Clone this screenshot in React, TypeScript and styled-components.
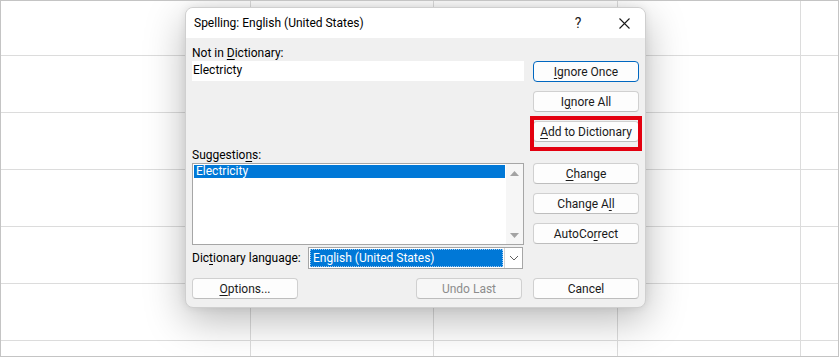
import React from "react";
import styled, { createGlobalStyle } from "styled-components";

const GlobalStyle = createGlobalStyle`
  html, body {
    margin: 0;
    padding: 0;
    background: #fff;
  }
  body {
    font-family: "Segoe UI", Roboto, "Noto Sans", "Liberation Sans", sans-serif;
    font-size: 12px;
    color: #000;
  }
`;

const GRID = "#dcdcdc";

const Styles = {
  Sheet: styled.div`
    width: 839px;
    height: 357px;
    box-sizing: border-box;
    border: 1px solid #c4c4c4;
    overflow: hidden;
    padding: 6px 0 0 184px;
    background-color: #fff;
    background-image:
      linear-gradient(${GRID}, ${GRID}),
      linear-gradient(${GRID}, ${GRID}),
      linear-gradient(${GRID}, ${GRID}),
      linear-gradient(${GRID}, ${GRID}),
      linear-gradient(to bottom, transparent 54px, ${GRID} 54px, ${GRID} 55px, transparent 55px);
    background-size: 1px 100%, 1px 100%, 1px 100%, 1px 100%, 100% 57px;
    background-position: 249px 0, 432px 0, 616px 0, 799px 0, 0 0;
    background-repeat: no-repeat, no-repeat, no-repeat, no-repeat, repeat-y;
  `,
  Dialog: styled.div`
    width: 461px;
    height: 301px;
    box-sizing: border-box;
    display: flex;
    flex-direction: column;
    border: 1px solid #cfcfcf;
    border-radius: 8px;
    overflow: hidden;
    background: #f0f0f0;
    box-shadow: 0 12px 40px rgba(0, 0, 0, 0.28), 0 0 8px rgba(0, 0, 0, 0.08);
  `,
  TitleBar: styled.div`
    height: 30px;
    flex: none;
    display: flex;
    align-items: center;
    padding: 0 6px 0 8px;
    background: #fff;
  `,
  Title: styled.div`
    flex: 1;
    font-size: 12px;
  `,
  TitleButton: styled.div<{ $gap?: number }>`
    width: 30px;
    margin-right: ${({ $gap }) => $gap || 0}px;
    display: flex;
    justify-content: center;
    align-items: center;
    font-size: 14px;
    color: #1a1a1a;
  `,
  Body: styled.div`
    flex: 1;
    display: grid;
    grid-template-columns: 332px 106px;
    column-gap: 9px;
    padding: 7px 6px 0 6px;
  `,
  Column: styled.div`
    display: flex;
    flex-direction: column;
  `,
  Label: styled.div<{ $top?: number }>`
    height: 16px;
    line-height: 16px;
    margin-top: ${({ $top }) => $top || 0}px;
    white-space: nowrap;
  `,
  TextField: styled.div`
    height: 20px;
    line-height: 19px;
    padding-left: 1px;
    background: #fff;
  `,
  ListBox: styled.div`
    height: 82px;
    box-sizing: border-box;
    display: flex;
    border: 1px solid #a6a6a6;
    background: #fff;
  `,
  ListItems: styled.div`
    flex: 1;
    padding: 1px;
  `,
  ListItem: styled.div<{ $selected?: boolean }>`
    height: 13px;
    line-height: 13px;
    padding-left: 2px;
    background: ${({ $selected }) => ($selected ? "#0078d7" : "transparent")};
    color: ${({ $selected }) => ($selected ? "#fff" : "#000")};
  `,
  ScrollBar: styled.div`
    width: 17px;
    display: flex;
    flex-direction: column;
    justify-content: space-between;
    align-items: center;
    padding: 7px 0 6px;
    background: #f6f6f6;
  `,
  LanguageRow: styled.div`
    display: flex;
    align-items: center;
    margin-top: 2px;
    height: 22px;
  `,
  LanguageLabel: styled.div`
    width: 116px;
    white-space: nowrap;
  `,
  Combo: styled.div`
    flex: 1;
    height: 22px;
    box-sizing: border-box;
    display: flex;
    border: 1px solid #a6a6a6;
    background: #fff;
    margin-right: 1px;
  `,
  ComboValue: styled.div`
    flex: 1;
    margin: 1px;
    padding-left: 2px;
    line-height: 16px;
    background: #0078d7;
    color: #fff;
    border: 1px dotted #9ec9f0;
  `,
  ComboArrow: styled.div`
    width: 17px;
    display: flex;
    align-items: center;
    justify-content: center;
    border-left: 1px solid #d4d4d4;
  `,
  ButtonRow: styled.div`
    display: flex;
    justify-content: space-between;
    margin-top: 9px;
    padding-right: 2px;
  `,
  Button: styled.div<{ $default?: boolean; $disabled?: boolean; $top?: number }>`
    position: relative;
    width: 106px;
    height: 21px;
    box-sizing: border-box;
    flex: none;
    margin-top: ${({ $top }) => $top || 0}px;
    display: flex;
    align-items: center;
    justify-content: center;
    border: 1px solid ${({ $default }) => ($default ? "#0067c0" : "#d0d0d0")};
    border-bottom-color: ${({ $default }) => ($default ? "#0067c0" : "#bdbdbd")};
    border-radius: 4px;
    background: ${({ $disabled }) => ($disabled ? "#f7f7f7" : "#fdfdfd")};
    color: ${({ $disabled }) => ($disabled ? "#8c8c8c" : "#1a1a1a")};
    white-space: nowrap;
  `,
  Highlight: styled.span`
    position: absolute;
    left: -4px;
    right: -4px;
    top: -6px;
    bottom: -10px;
    border: 4px solid #e3000f;
    pointer-events: none;
  `,
  Key: styled.u`
    text-underline-offset: 2px;
  `
};

const Triangle = ({ up }: { up?: boolean }) => (
  <svg width="9" height="5" viewBox="0 0 9 5">
    <path d={up ? "M0 5 L4.5 0 L9 5 Z" : "M0 0 L4.5 5 L9 0 Z"} fill="#a3a3a3" />
  </svg>
);

const Chevron = () => (
  <svg width="10" height="6" viewBox="0 0 10 6">
    <path d="M1 1 L5 5 L9 1" fill="none" stroke="#606060" strokeWidth="1" />
  </svg>
);

const Close = () => (
  <svg width="11" height="11" viewBox="0 0 11 11">
    <path d="M0.5 0.5 L10.5 10.5 M10.5 0.5 L0.5 10.5" stroke="#1a1a1a" strokeWidth="1.1" />
  </svg>
);

const App = () => {
  return (
    <>
      <GlobalStyle />
      <Styles.Sheet>
        <Styles.Dialog>
          <Styles.TitleBar>
            <Styles.Title>Spelling: English (United States)</Styles.Title>
            <Styles.TitleButton $gap={16}>?</Styles.TitleButton>
            <Styles.TitleButton><Close /></Styles.TitleButton>
          </Styles.TitleBar>
          <Styles.Body>
            <Styles.Column>
              <Styles.Label>Not in <Styles.Key>D</Styles.Key>ictionary:</Styles.Label>
              <Styles.TextField>Electricty</Styles.TextField>
              <Styles.Label $top={66}>Suggestio<Styles.Key>n</Styles.Key>s:</Styles.Label>
              <Styles.ListBox>
                <Styles.ListItems>
                  <Styles.ListItem $selected>Electricity</Styles.ListItem>
                </Styles.ListItems>
                <Styles.ScrollBar>
                  <Triangle up />
                  <Triangle />
                </Styles.ScrollBar>
              </Styles.ListBox>
              <Styles.LanguageRow>
                <Styles.LanguageLabel>Dic<Styles.Key>t</Styles.Key>ionary language:</Styles.LanguageLabel>
                <Styles.Combo>
                  <Styles.ComboValue>English (United States)</Styles.ComboValue>
                  <Styles.ComboArrow><Chevron /></Styles.ComboArrow>
                </Styles.Combo>
              </Styles.LanguageRow>
              <Styles.ButtonRow>
                <Styles.Button><Styles.Key>O</Styles.Key>ptions...</Styles.Button>
                <Styles.Button $disabled>Undo Last</Styles.Button>
              </Styles.ButtonRow>
            </Styles.Column>
            <Styles.Column>
              <Styles.Button $default $top={16}><Styles.Key>I</Styles.Key>gnore Once</Styles.Button>
              <Styles.Button $top={9}>I<Styles.Key>g</Styles.Key>nore All</Styles.Button>
              <Styles.Button $top={9}>
                <Styles.Key>A</Styles.Key>dd to Dictionary
                <Styles.Highlight />
              </Styles.Button>
              <Styles.Button $top={21}><Styles.Key>C</Styles.Key>hange</Styles.Button>
              <Styles.Button $top={9}>Change A<Styles.Key>l</Styles.Key>l</Styles.Button>
              <Styles.Button $top={9}>AutoCo<Styles.Key>r</Styles.Key>rect</Styles.Button>
              <Styles.Button $top={34}>Cancel</Styles.Button>
            </Styles.Column>
          </Styles.Body>
        </Styles.Dialog>
      </Styles.Sheet>
    </>
  );
};

export default App;
